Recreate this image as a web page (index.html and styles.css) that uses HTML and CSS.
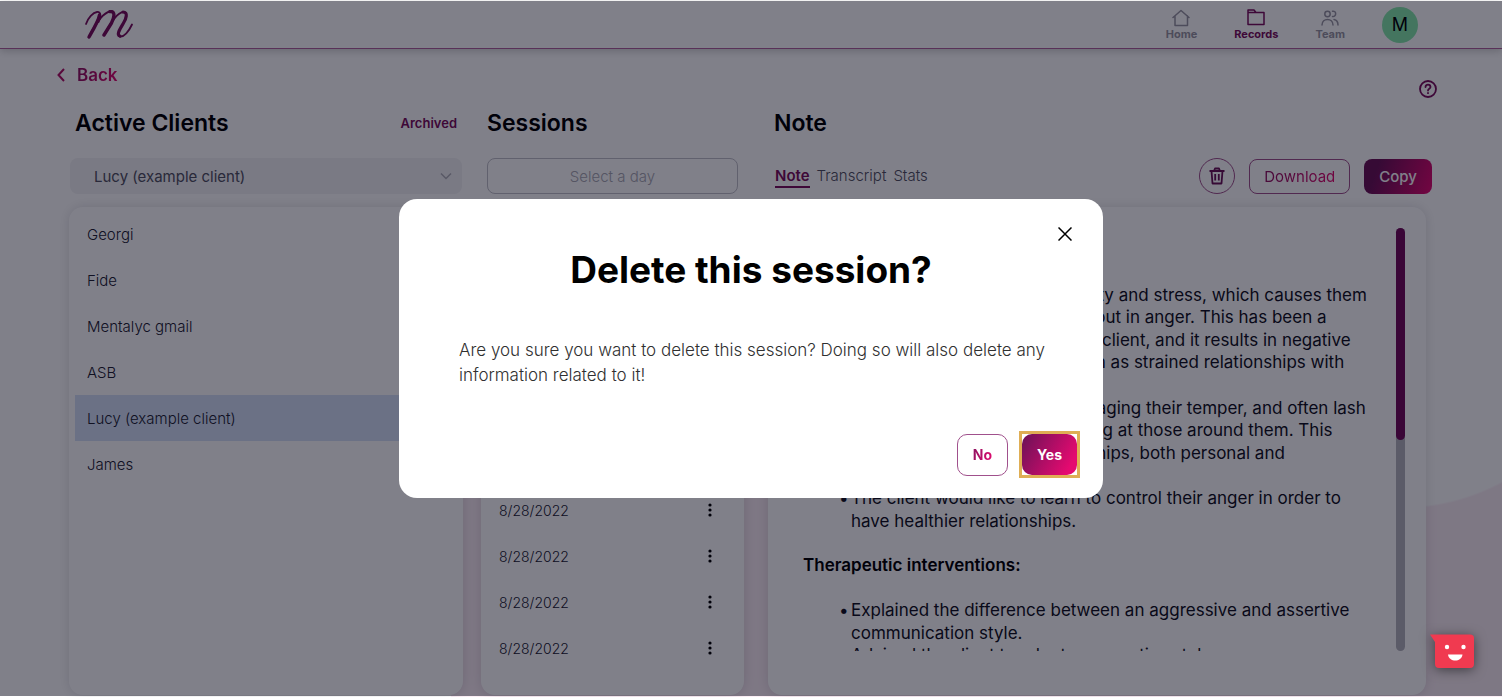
FILE: index.html
```html
<!DOCTYPE html>
<html lang="en">

<head>
    <meta charset="utf-8">
    <meta name="viewport" content="width=device-width, initial-scale=1">
    <title>Records</title>
    <link rel="stylesheet" href="styles.css">
</head>

<body>
    <header class="header">
        <a href="#" class="logo" aria-label="Home page">
            <svg width="48" height="30" viewBox="0 0 48 30" fill="none" stroke="currentColor" stroke-linecap="round" stroke-linejoin="round">
                <path stroke-width="1.8" d="M1 14C3 8 8 2.500 12 2C16.500 1.500 16 7 13.500 12"/>
                <path stroke-width="3.4" d="M14.500 5C14 10 8 20 4 27"/>
                <path stroke-width="1.8" d="M5 25C10 15 18 3 25 1.500"/>
                <path stroke-width="3.4" d="M25 1.500C31 1 29 8 26.500 13L19 25"/>
                <path stroke-width="1.8" d="M20 24C25 14 32 3 38 2"/>
                <path stroke-width="3.2" d="M38 2C43.500 2 41 9 38.500 13C35 19 31 25 35 26"/>
                <path stroke-width="1.8" d="M34.500 26.500C39 27.500 44 21 47 14.500"/>
            </svg>
        </a>
        <nav class="nav">
            <a href="#" class="nav-link">
                <svg width="18" height="18" viewBox="0 0 18 18" fill="none" stroke="currentColor" stroke-width="1.5" stroke-linecap="round" stroke-linejoin="round"><path d="M1 8.500L9 1.500L17 8.500M3 7V16.500H15.500V7"/></svg>
                <span>Home</span>
            </a>
            <a href="#" class="nav-link active">
                <svg width="18" height="18" viewBox="0 0 18 18" fill="none" stroke="currentColor" stroke-width="1.5" stroke-linejoin="round"><path d="M1 1H7L9 3.500H17V15.500H1ZM1 3.500H9"/></svg>
                <span>Records</span>
            </a>
            <a href="#" class="nav-link">
                <svg width="18" height="18" viewBox="0 0 18 18" fill="none" stroke="currentColor" stroke-width="1.5" stroke-linecap="round"><circle cx="6.500" cy="5" r="2.700"/><path d="M1 16C1 8.500 12 8.500 12 16M11.500 2.200C15.700 1.500 15.700 8 11.500 7.500M13 10.500C15.500 11 17 13 17 16"/></svg>
                <span>Team</span>
            </a>
            <button class="avatar">M</button>
        </nav>
    </header>

    <main class="main">
        <div class="topbar">
            <a href="#" class="back">
                <svg width="8" height="14" viewBox="0 0 8 14" fill="none" stroke="currentColor" stroke-width="2"><path d="M7 1L1.500 7L7 13"/></svg>
                <span class="gradient-text">Back</span>
            </a>
            <button class="help" aria-label="Help">
                <svg width="18" height="18" viewBox="0 0 18 18" fill="none" stroke="currentColor" stroke-width="1.8" stroke-linecap="round"><circle cx="9" cy="9" r="8"/><path d="M6.500 7C6.500 3.700 11.500 3.700 11.500 7C11.500 8.800 9 8.700 9 10.500M9 13V13.200"/></svg>
            </button>
        </div>

        <div class="columns">
            <section class="column">
                <div class="column-head">
                    <h2>Active Clients</h2>
                    <button class="archived">Archived</button>
                </div>
                <div class="controls client-controls">
                    <select class="client-select" aria-label="Client">
                        <option>Lucy (example client)</option>
                    </select>
                    <svg class="chevron" width="12" height="8" viewBox="0 0 12 8" fill="none" stroke="currentColor" stroke-width="1.5"><path d="M1 1.500L6 6.500L11 1.500"/></svg>
                </div>
                <ul class="card list">
                    <li class="row">Georgi</li>
                    <li class="row">Fide</li>
                    <li class="row">Mentalyc gmail</li>
                    <li class="row">ASB</li>
                    <li class="row selected">Lucy (example client)</li>
                    <li class="row">James</li>
                </ul>
            </section>

            <section class="column">
                <div class="column-head">
                    <h2>Sessions</h2>
                </div>
                <div class="controls session-controls">
                    <input type="text" class="day" placeholder="Select a day" aria-label="Session day">
                </div>
                <ul class="card list" id="sessions"></ul>
            </section>

            <section class="column note-column">
                <div class="column-head">
                    <h2>Note</h2>
                </div>
                <div class="controls note-controls">
                    <div class="tabs">
                        <a href="#" class="tab active">Note</a>
                        <a href="#" class="tab">Transcript</a>
                        <a href="#" class="tab">Stats</a>
                    </div>
                    <button class="trash" aria-label="Delete session">
                        <svg width="16" height="18" viewBox="0 0 16 18" fill="none" stroke="currentColor" stroke-width="1.8" stroke-linejoin="round"><path d="M0.500 4H15.500M5 4L6 1.500H10L11 4M2.500 4L3.500 16.500H12.500L13.500 4M6.200 7V13.500M9.800 7V13.500"/></svg>
                    </button>
                    <button class="download"><span class="gradient-text">Download</span></button>
                    <button class="copy">Copy</button>
                </div>
                <div class="card note">
                    <div class="note-text">
                        <h3>Presenting problem:</h3>
                        <ul>
                            <li>The client is battling with anxiety and stress, which causes them<br>
                                to be very irritable and to lash out in anger. This has been a<br>
                                great problem for years for the client, and it results in negative<br>
                                consequences in their life, such as strained relationships with<br>
                                other people.</li>
                            <li>The client has difficulty in managing their temper, and often lash<br>
                                out by shouting and often yelling at those around them. This<br>
                                has damaged all their relationships, both personal and<br>
                                professional.</li>
                            <li>The client would like to learn to control their anger in order to<br>
                                have healthier relationships.</li>
                        </ul>
                        <h3>Therapeutic interventions:</h3>
                        <ul>
                            <li>Explained the difference between an aggressive and assertive<br>
                                communication style.</li>
                            <li>Advised the client to adopt an assertive style.</li>
                        </ul>
                    </div>
                    <div class="track"><div class="thumb"></div></div>
                </div>
            </section>
        </div>
    </main>

    <div class="overlay">
        <div class="modal" role="dialog" aria-modal="true" aria-labelledby="modal-title">
            <button class="close" aria-label="Close">
                <svg width="14" height="14" viewBox="0 0 14 14" stroke="currentColor" stroke-width="1.5"><path d="M0.500 0.500L13.500 13.500M13.500 0.500L0.500 13.500"/></svg>
            </button>
            <h1 id="modal-title">Delete this session?</h1>
            <p>Are you sure you want to delete this session? Doing so will also delete any information related to it!</p>
            <div class="modal-buttons">
                <button class="no"><span class="gradient-text">No</span></button>
                <div class="highlight"><button class="yes">Yes</button></div>
            </div>
        </div>
    </div>

    <button class="chat" aria-label="Feedback">
        <svg width="44" height="34" viewBox="0 0 44 34"><path fill="#f03a50" d="M0 0.500H40Q44 0.500 44 4V30Q44 34 40 34H9Q5 34 5 30V8Z"/><circle cx="17" cy="13" r="2.200" fill="#fff"/><circle cx="33.500" cy="13" r="2.200" fill="#fff"/><path fill="#fff" d="M18 20.500H32.500C31.500 28.500 19 28.500 18 20.500Z"/></svg>
    </button>

    <script>
        const sessions = document.getElementById("sessions");
        for (let i = 0; i < 10; i++) {
            sessions.innerHTML += `<li class="row session">8/28/2022
                <button class="dots" aria-label="Session menu"><svg width="4" height="14" viewBox="0 0 4 14" fill="currentColor"><circle cx="2" cy="2" r="1.600"/><circle cx="2" cy="7" r="1.600"/><circle cx="2" cy="12" r="1.600"/></svg></button></li>`;
        }
    </script>
</body>

</html>
```
FILE: styles.css
```css
* {
    box-sizing: border-box;
}

body {
    margin: 0;
    padding: 1px 0;
    height: 100vh;
    display: flex;
    flex-direction: column;
    overflow: hidden;
    font-family: Inter, sans-serif;
    color: #000;
    background-color: #fff;
    background-image:
        radial-gradient(circle 217px at calc(100% - 102px) 292px, #fff 99%, transparent 100%),
        linear-gradient(#fbeef5, #fbeef5);
    background-size: auto, 70% 65%;
    background-position: 0 0, right bottom;
    background-repeat: no-repeat;
}

button {
    font-family: inherit;
    border: none;
    background: none;
    padding: 0;
    cursor: pointer;
}

a {
    text-decoration: none;
}

svg {
    display: block;
}

h1, h2, h3, ul, p {
    margin: 0;
}

ul {
    padding: 0;
    list-style: none;
}

.gradient-text {
    color: transparent;
    background: linear-gradient(110deg, #8a1460, #e50a70);
    background-clip: text;
    -webkit-background-clip: text;
}

/* header */
.header {
    flex: none;
    height: 48px;
    padding: 0 84px 0 85px;
    display: flex;
    align-items: center;
    justify-content: space-between;
    background-color: #fff;
    border-bottom: 1px solid #b0609c;
    box-shadow: 0 2px 8px rgba(0, 0, 0, 0.2);
}

.logo {
    color: #7a0e5c;
}

.nav {
    display: flex;
    align-items: center;
    gap: 37px;
}

.nav-link {
    display: flex;
    flex-direction: column;
    align-items: center;
    font-size: 11px;
    line-height: 14px;
    font-weight: 700;
    color: #9896a2;
}

.nav-link.active {
    color: #7a0e5c;
}

.avatar {
    width: 36px;
    height: 36px;
    border-radius: 50%;
    background-color: #87e8ab;
    font-size: 18px;
}

/* page */
.main {
    flex: 1;
    min-height: 0;
    display: flex;
    flex-direction: column;
}

.topbar {
    height: 58px;
    flex: none;
    padding: 16px 65px 0 57px;
    display: flex;
    justify-content: space-between;
    align-items: flex-start;
}

.back {
    display: flex;
    align-items: center;
    gap: 12px;
    font-size: 17px;
    line-height: 20px;
    font-weight: 600;
    color: #b01064;
}

.help {
    margin-top: 15px;
    color: #7a0e5c;
}

.columns {
    flex: 1;
    min-height: 0;
    display: grid;
    grid-template-columns: 394fr 263fr 664fr;
    gap: 18px;
    padding: 0 76px 1px 69px;
}

.column {
    min-width: 0;
    min-height: 0;
    display: flex;
    flex-direction: column;
}

.note-column {
    padding-left: 6px;
}

.column-head {
    height: 32px;
    flex: none;
    padding: 0 6px;
    display: flex;
    align-items: center;
    justify-content: space-between;
}

.column-head h2 {
    font-size: 23px;
    font-weight: 600;
}

.archived {
    font-size: 13px;
    font-weight: 600;
    color: #7a0e5c;
}

.controls {
    height: 36px;
    flex: none;
    margin: 19px 0 13px;
}

.client-controls {
    display: grid;
    align-items: center;
    padding: 0 1px;
}

.client-select {
    grid-area: 1 / 1;
    height: 36px;
    padding: 0 24px;
    border: none;
    border-radius: 8px;
    appearance: none;
    background-color: #f2f2f4;
    font-family: inherit;
    font-size: 15px;
    color: #505060;
}

.chevron {
    grid-area: 1 / 1;
    justify-self: end;
    margin-right: 10px;
    color: #b0b0b8;
}

.session-controls {
    padding: 0 6px;
}

.day {
    width: 100%;
    height: 36px;
    border: 1px solid #c0c0c8;
    border-radius: 8px;
    background: none;
    font-family: inherit;
    font-size: 15px;
    text-align: center;
}

.day::placeholder {
    color: #a8a8b2;
    font-weight: 300;
}

.note-controls {
    display: flex;
    align-items: center;
    gap: 14px;
    margin-right: -6px;
    padding-left: 7px;
}

.tabs {
    flex: 1;
    display: flex;
    gap: 7px;
}

.tab {
    font-size: 15px;
    line-height: 21px;
    font-weight: 300;
    color: #505060;
    border-bottom: 2px solid transparent;
}

.tab.active {
    font-weight: 600;
    color: #7a0e5c;
    border-color: #7a0e5c;
}

.trash {
    width: 36px;
    height: 36px;
    display: grid;
    place-items: center;
    border: 1px solid #a0508c;
    border-radius: 50%;
    color: #6a1257;
}

.download,
.copy {
    height: 35px;
    padding: 0 14px;
    border: 1px solid #a0508c;
    border-radius: 8px;
    font-size: 15px;
}

.copy {
    border-color: transparent;
    background: linear-gradient(110deg, #6a1257 20%, #e50a70) border-box;
    color: #fff;
    font-weight: 500;
}

.card {
    flex: 1;
    min-height: 0;
    border-radius: 14px;
    background-color: #fff;
    box-shadow: 0 0 12px rgba(0, 0, 30, 0.13);
}

.list {
    padding: 4px 6px;
}

.row {
    height: 46px;
    padding: 0 12px;
    display: flex;
    align-items: center;
    font-size: 15px;
    font-weight: 300;
    color: #202030;
}

.row.selected {
    background-color: #d4e0f7;
}

.session {
    justify-content: space-between;
    padding-right: 26px;
    font-size: 14px;
}

.dots {
    color: #000;
}

/* note */
.note {
    display: flex;
    justify-content: space-between;
    padding: 21px 21px 44px 35px;
}

.note-text {
    overflow: hidden;
    padding-top: 11px;
    font-size: 17px;
    line-height: 1.33;
    white-space: nowrap;
    color: #101020;
}

.note-text h3 {
    font-size: 17px;
    font-weight: 600;
    color: #000;
}

.note-text ul {
    margin: 22px 0;
    padding-left: 48px;
}

.note-text li::before {
    content: "•";
    float: left;
    margin-left: -12px;
}

.track {
    width: 9px;
    flex: none;
    border-radius: 5px;
    background-color: #b4b4bc;
}

.thumb {
    height: 50%;
    border-radius: 5px;
    background-color: #720a5a;
}

/* delete dialog */
.overlay {
    position: fixed;
    inset: 1px 0;
    display: grid;
    place-items: center;
    background-color: rgba(2, 2, 19, 0.5);
}

.modal {
    width: 704px;
    max-width: 100%;
    padding: 28px 23px 20px 60px;
    border-radius: 18px;
    background-color: #fff;
    display: flex;
    flex-direction: column;
}

.close {
    align-self: flex-end;
    margin-right: 8px;
}

.modal h1 {
    margin: 6px 37px 45px 0;
    text-align: center;
    font-size: 37px;
    line-height: 46px;
    font-weight: 700;
}

.modal p {
    margin: 0 20px 43px 0;
    font-size: 17px;
    line-height: 25px;
    font-weight: 300;
    color: #303030;
}

.modal-buttons {
    display: flex;
    align-items: center;
    justify-content: flex-end;
    gap: 11px;
}

.no,
.yes {
    height: 42px;
    padding: 0 15px;
    border-radius: 10px;
    font-size: 14px;
    font-weight: 700;
}

.no {
    border: 1px solid #a0508c;
}

.highlight {
    border: 3px solid #dfae55;
}

.yes {
    display: block;
    height: 41px;
    background: linear-gradient(120deg, #6a1257, #e50a70 85%);
    color: #fff;
}

.chat {
    position: fixed;
    right: 28px;
    bottom: 29px;
    filter: drop-shadow(0 2px 6px rgba(0, 0, 0, 0.5));
}
```
